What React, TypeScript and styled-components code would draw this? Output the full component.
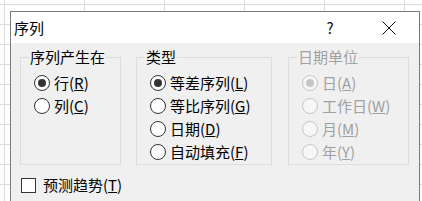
import React from "react";
import styled, { createGlobalStyle } from "styled-components";

const Global = createGlobalStyle`
  html, body { margin: 0; padding: 0; }
  body {
    width: 422px;
    height: 201px;
    overflow: hidden;
    background-color: #ffffff;
    background-image:
      linear-gradient(to right, #dadada 1px, transparent 1px),
      linear-gradient(to bottom, #dadada 1px, transparent 1px);
    background-size: 80px 20px;
    background-position: 4px 4px;
    font-family: "Noto Sans CJK SC", "Noto Sans", sans-serif;
    color: #000;
  }
`;

const Dialog = styled.div`
  box-sizing: border-box;
  margin: 11px 0 0 10px;
  width: 410px;
  height: 200px;
  border: 1px solid #7a7a7a;
  border-bottom: none;
  background: #f0f0f0;
  display: flex;
  flex-direction: column;
`;

const TitleBar = styled.div`
  height: 31px;
  background: #ffffff;
  display: flex;
  align-items: center;
  padding-left: 3px;
`;

const Title = styled.span`
  font-size: 15px;
  line-height: 16px;
  flex: 1;
`;

const HelpButton = styled.span`
  width: 30px;
  text-align: center;
  font-size: 15px;
  line-height: 16px;
  color: #111;
`;

const CloseButton = styled.span`
  width: 46px;
  height: 31px;
  margin-left: 21px;
  margin-right: 7px;
  display: flex;
  align-items: center;
  justify-content: center;
`;

const Body = styled.div`
  padding: 6px 0 0 9px;
  display: flex;
  flex-direction: column;
`;

const Groups = styled.div`
  display: flex;
  align-items: flex-start;
`;

const Group = styled.fieldset<{ $w: number; $ml: number }>`
  box-sizing: border-box;
  width: ${(p) => p.$w}px;
  margin: 0 0 0 ${(p) => p.$ml}px;
  padding: 6px 0 0 13px;
  border: 1px solid #dcdcdc;
  min-inline-size: 0;
`;

const Legend = styled.legend<{ $disabled?: boolean }>`
  padding: 0 1px;
  margin-left: -5px;
  font-size: 15px;
  line-height: 16px;
  color: ${(p) => (p.$disabled ? "#a0a0a0" : "#000")};
`;

const Options = styled.div`
  height: 93px;
  display: flex;
  flex-direction: column;
`;

const Option = styled.label<{ $disabled?: boolean }>`
  height: 23px;
  display: flex;
  align-items: center;
  gap: 4px;
  font-size: 15px;
  line-height: 16px;
  white-space: nowrap;
  color: ${(p) => (p.$disabled ? "#a0a0a0" : "#000")};
`;

const Radio = styled.span<{ $checked?: boolean; $disabled?: boolean }>`
  box-sizing: border-box;
  width: 16px;
  height: 16px;
  border-radius: 50%;
  border: 1px solid ${(p) => (p.$disabled ? "#c6c6c6" : "#333")};
  background: ${(p) => (p.$disabled ? "#f7f7f7" : "#fff")};
  display: flex;
  align-items: center;
  justify-content: center;
  flex: none;
  &::after {
    content: "";
    display: ${(p) => (p.$checked ? "block" : "none")};
    width: 8px;
    height: 8px;
    border-radius: 50%;
    background: ${(p) => (p.$disabled ? "#c6c6c6" : "#333")};
  }
`;

const CheckRow = styled.label`
  margin-top: 10px;
  height: 20px;
  display: flex;
  align-items: center;
  gap: 7px;
  font-size: 15px;
  line-height: 16px;
`;

const CheckBox = styled.span`
  box-sizing: border-box;
  width: 15px;
  height: 15px;
  border: 1px solid #333;
  background: #fff;
  margin-left: 1px;
`;

type Opt = { text: string; key: string; checked?: boolean };

const RadioGroup = ({
  title,
  options,
  width,
  ml,
  disabled,
}: {
  title: string;
  options: Opt[];
  width: number;
  ml: number;
  disabled?: boolean;
}) => (
  <Group $w={width} $ml={ml}>
    <Legend $disabled={disabled}>{title}</Legend>
    <Options>
      {options.map((o) => (
        <Option key={o.text} $disabled={disabled}>
          <Radio $checked={o.checked} $disabled={disabled} />
          <span>
            {o.text}(<u>{o.key}</u>)
          </span>
        </Option>
      ))}
    </Options>
  </Group>
);

export default function App() {
  return (
    <>
      <Global />
      <Dialog>
        <TitleBar>
          <Title>序列</Title>
          <HelpButton>?</HelpButton>
          <CloseButton>
            <svg width="14" height="14" viewBox="0 0 14 14">
              <path d="M0.5 0.5 L13.5 13.5 M13.5 0.5 L0.5 13.5" stroke="#111" strokeWidth="1" />
            </svg>
          </CloseButton>
        </TitleBar>
        <Body>
          <Groups>
            <RadioGroup
              title="序列产生在"
              width={101}
              ml={0}
              options={[
                { text: "行", key: "R", checked: true },
                { text: "列", key: "C" },
              ]}
            />
            <RadioGroup
              title="类型"
              width={136}
              ml={15}
              options={[
                { text: "等差序列", key: "L", checked: true },
                { text: "等比序列", key: "G" },
                { text: "日期", key: "D" },
                { text: "自动填充", key: "F" },
              ]}
            />
            <RadioGroup
              title="日期单位"
              width={121}
              ml={16}
              disabled
              options={[
                { text: "日", key: "A", checked: true },
                { text: "工作日", key: "W" },
                { text: "月", key: "M" },
                { text: "年", key: "Y" },
              ]}
            />
          </Groups>
          <CheckRow>
            <CheckBox />
            <span>
              预测趋势(<u>T</u>)
            </span>
          </CheckRow>
        </Body>
      </Dialog>
    </>
  );
}
